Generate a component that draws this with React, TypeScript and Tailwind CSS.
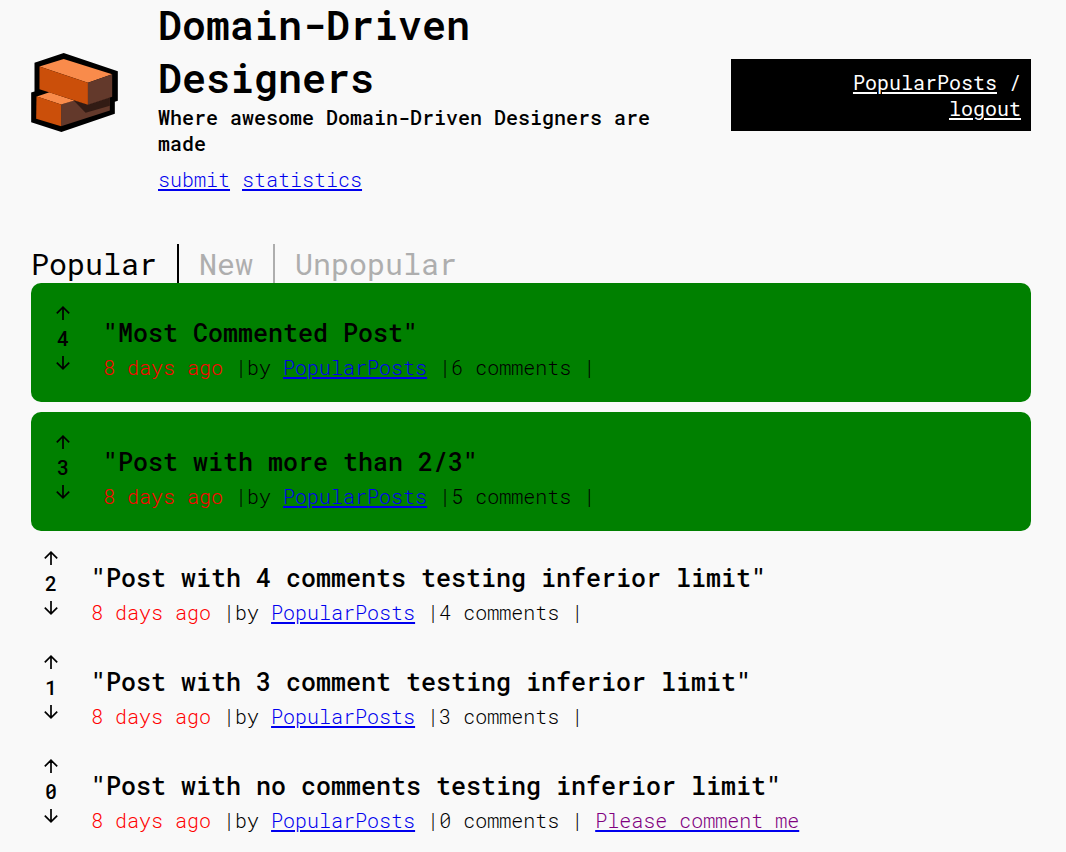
import React from "react";

type Post = {
  title: string;
  votes: number;
  comments: number;
  highlighted: boolean;
};

const posts: Post[] = [
  { title: "Most Commented Post", votes: 4, comments: 6, highlighted: true },
  { title: "Post with more than 2/3", votes: 3, comments: 5, highlighted: true },
  { title: "Post with 4 comments testing inferior limit", votes: 2, comments: 4, highlighted: false },
  { title: "Post with 3 comment testing inferior limit", votes: 1, comments: 3, highlighted: false },
  { title: "Post with no comments testing inferior limit", votes: 0, comments: 0, highlighted: false },
];

function Logo() {
  return (
    <svg viewBox="33 38 261 238" className="h-[79px] w-[87px]" role="img" aria-label="Bricks">
      <path d="M131 38 294 93V182L285 185V221L124 276 33 247V157L43 154V67Z" fill="#000" />
      <path d="M123 193 161 181 204 194 270 172V211L123 259Z" fill="#63392b" />
      <path d="M161 181 204 194 270 172V197L197 218Z" fill="#321b14" />
      <path d="M50 169 88 156 163 181 123 193Z" fill="#f98b4b" />
      <path d="M49 168 123 193V259L48 236Z" fill="#cb4f0a" />
      <path d="M131 56 277 102 204 128 58 79Z" fill="#f98b4b" />
      <path d="M58 79 204 128V194L58 147Z" fill="#cb4f0a" />
      <path d="M204 128 277 102V170L204 194Z" fill="#63392b" />
    </svg>
  );
}

function Arrow({ down = false }: { down?: boolean }) {
  return (
    <svg
      viewBox="0 0 14 14"
      className={down ? "h-[14px] w-[14px] rotate-180" : "h-[14px] w-[14px]"}
      fill="none"
      stroke="currentColor"
      strokeWidth="1.7"
      aria-hidden="true"
    >
      <path d="M7 14V1M0.8 7.4 7 1.2 13.2 7.4" />
    </svg>
  );
}

function PostRow({ post }: { post: Post }) {
  return (
    <li className={post.highlighted ? "rounded-[10px] bg-[#008000] px-3 pt-[13px] pb-3" : ""}>
      <article className="flex pb-[10px]">
        <div className="flex w-10 shrink-0 flex-col items-center pt-1">
          <button type="button" aria-label="Upvote" className="flex h-[25px] items-center">
            <Arrow />
          </button>
          <span className="font-medium">{post.votes}</span>
          <button type="button" aria-label="Downvote" className="flex h-6 items-center">
            <Arrow down />
          </button>
        </div>
        <div className="min-w-0 flex-1 pt-5 pl-5">
          <h2 className="text-[25px] leading-[33px] font-medium">
            <a href="#post">"{post.title}"</a>
          </h2>
          <p className="mt-[5px] font-light">
            <span className="text-[#ff0000]">8 days ago</span> |by{" "}
            <a href="#member" className="text-[#0000ee] underline">
              PopularPosts
            </a>{" "}
            |{post.comments} comments |
            {post.comments === 0 && (
              <>
                {" "}
                <a href="#comment" className="text-[#800080] underline decoration-[#0000ee]">
                  Please comment me
                </a>
              </>
            )}
          </p>
        </div>
      </article>
    </li>
  );
}

export default function App() {
  return (
    <div className="flow-root min-h-screen bg-[#f9f9f9] pr-[35px] pl-[31px] font-['Roboto_Mono','Liberation_Mono',monospace] text-[20px] leading-[26px] text-black [&_a]:decoration-2 [&_a]:underline-offset-2">
      <header className="flex items-start">
        <div className="w-[127px] shrink-0 pt-[53px]">
          <Logo />
        </div>
        <div className="-mt-0.5 min-w-0 flex-1 pr-10">
          <h1 className="text-[40px] leading-[53px] font-semibold">Domain-Driven Designers</h1>
          <p className="font-medium">Where awesome Domain-Driven Designers are made</p>
          <nav className="mt-[10px] flex gap-3 font-light text-[#0000ee]">
            <a href="#submit" className="underline">submit</a>
            <a href="#statistics" className="underline">statistics</a>
          </nav>
        </div>
        <div className="mt-[59px] w-[30%] shrink-0 bg-black py-[10px] pr-[10px] pl-[60px] text-right text-white">
          <a href="#member" className="underline">PopularPosts</a> /{" "}
          <a href="#logout" className="underline">logout</a>
        </div>
      </header>
      <main className="mt-[52px] pb-4">
        <nav className="flex text-[30px] leading-[39px] text-[#aeaeae]">
          <a href="#popular" className="border-r-2 border-black pr-5 text-black">Popular</a>
          <a href="#new" className="border-r-2 border-[#aeaeae] px-5">New</a>
          <a href="#unpopular" className="px-5">Unpopular</a>
        </nav>
        <ul className="flex flex-col gap-[10px]">
          {posts.map((post) => (
            <PostRow key={post.title} post={post} />
          ))}
        </ul>
      </main>
    </div>
  );
}
